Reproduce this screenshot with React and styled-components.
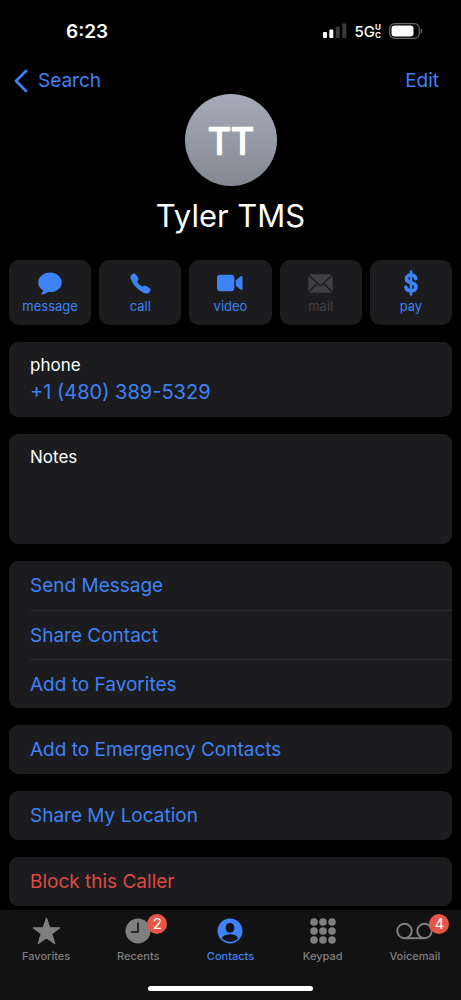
import styled, { createGlobalStyle } from 'styled-components';
import { IoCall } from 'react-icons/io5';

const GlobalStyle = createGlobalStyle`
  * {
    box-sizing: border-box;
  }

  body {
    margin: 0;
    background: #000;
    color: #fff;
    font-family: Inter, 'Liberation Sans', sans-serif;
  }

  button {
    font-family: inherit;
    border: 0;
    padding: 0;
    background: none;
    cursor: pointer;
  }

  a {
    color: inherit;
    text-decoration: none;
  }

  svg {
    display: block;
  }
`;

const Screen = styled.div`
  min-height: 100vh;
  display: flex;
  flex-direction: column;
`;

const StatusBar = styled.div`
  height: 62px;
  padding: 0 38px 0 66px;
  display: flex;
  align-items: center;
  justify-content: space-between;

  .time {
    font-size: 19px;
    font-weight: 600;
  }

  .indicators {
    display: flex;
    align-items: center;
    gap: 8px;
  }

  .network {
    display: flex;
    align-items: center;
    font-size: 15px;
    font-weight: 500;
  }

  .network small {
    display: grid;
    font-size: 8px;
    font-weight: 700;
    line-height: 8px;
  }
`;

const NavBar = styled.nav`
  height: 32px;
  padding: 6px 22px 0 14px;
  display: flex;
  align-items: center;
  justify-content: space-between;
  color: #3d82f7;
  font-size: 19px;
  line-height: 26px;

  a {
    display: flex;
    align-items: center;
    gap: 10px;
  }

  button {
    color: inherit;
    font-size: inherit;
    line-height: inherit;
  }
`;

const Header = styled.header`
  display: flex;
  flex-direction: column;
  align-items: center;

  h1 {
    margin: 10px 0 24px;
    font-size: 31px;
    font-weight: 400;
    line-height: 40px;
  }
`;

const Content = styled.main`
  display: flex;
  flex-direction: column;
  gap: 17px;
  padding: 0 9px 4px;
`;

const Actions = styled.div`
  display: grid;
  grid-template-columns: repeat(5, 1fr);
  gap: 8px;
`;

const ActionButton = styled.button`
  height: 65px;
  padding-top: 9px;
  display: flex;
  flex-direction: column;
  align-items: center;
  border-radius: 10px;
  background: #1c1c1e;
  color: #3d82f7;
  font-size: 13px;
  line-height: 18px;

  &:disabled {
    color: #3f3f42;
    cursor: default;
  }

  .icon {
    height: 28px;
    display: flex;
    align-items: center;
  }
`;

const Card = styled.section`
  border-radius: 9px;
  background: #1c1c1e;
  overflow: hidden;
`;

const Field = styled.div`
  min-height: ${({ $tall }) => ($tall ? 110 : 75)}px;
  padding: 11px 21px;
  display: flex;
  flex-direction: column;
  gap: 2px;
  font-size: 17px;
  line-height: 24px;

  a {
    color: #3d82f7;
    font-size: 20px;
    line-height: 26px;
  }

  textarea {
    flex: 1;
    width: 100%;
    padding: 0;
    border: 0;
    outline: 0;
    resize: none;
    background: transparent;
    color: inherit;
    font: inherit;
  }
`;

const List = styled.ul`
  list-style: none;
  margin: 0;
  padding: 0 0 0 21px;

  li + li {
    border-top: 1px solid #2b2b2d;
  }

  li {
    height: 49px;
    display: flex;
  }
`;

const RowButton = styled.button`
  flex: 1;
  text-align: left;
  color: ${({ $danger }) => ($danger ? '#dc4a3e' : '#3d82f7')};
  font-size: 19px;
`;

const TabBar = styled.footer`
  position: sticky;
  bottom: 0;
  height: 90px;
  margin-top: auto;
  padding-bottom: 9px;
  display: flex;
  flex-direction: column;
  justify-content: space-between;
  align-items: center;
  background: #121212;

  nav {
    width: 100%;
    display: grid;
    grid-template-columns: repeat(5, 1fr);
  }
`;

const Tab = styled.a`
  padding-top: 7px;
  display: flex;
  flex-direction: column;
  align-items: center;
  gap: 3px;
  color: ${({ $active }) => ($active ? '#3d82f7' : '#7f7f7f')};
  font-size: 11px;
  font-weight: 500;
  line-height: 16px;

  .icon {
    position: relative;
    height: 28px;
    display: flex;
    align-items: center;
  }
`;

const Badge = styled.span`
  position: absolute;
  top: -3px;
  left: calc(100% - 4px);
  min-width: 20px;
  height: 20px;
  border-radius: 10px;
  background: #eb5545;
  color: #fff;
  font-size: 15px;
  font-weight: 400;
  line-height: 20px;
  text-align: center;
`;

const HomeIndicator = styled.div`
  width: 36%;
  height: 5px;
  border-radius: 3px;
  background: #fff;
`;

const SignalIcon = () => (
  <svg width="24" height="16" viewBox="0 0 24 16" fill="#fff">
    <rect x="0" y="9" width="4" height="6" rx="1" />
    <rect x="6.3" y="6.5" width="4" height="8.5" rx="1" />
    <rect x="12.8" y="3.5" width="4" height="11.5" rx="1" fill="#3a3a3a" />
    <rect x="19.3" y="0.5" width="4" height="14.5" rx="1" fill="#3a3a3a" />
  </svg>
);

const BatteryIcon = () => (
  <svg width="34" height="16" viewBox="0 0 34 16">
    <rect
      x="0.7"
      y="0.7"
      width="29.6"
      height="14.6"
      rx="4.8"
      fill="none"
      stroke="#6a6a6a"
      strokeWidth="1.2"
    />
    <rect x="2.5" y="2.5" width="22" height="11" rx="3.2" fill="#fff" />
    <path d="M31.6 5.5c1.1.4 1.7 1.4 1.7 2.5s-.6 2.1-1.7 2.5z" fill="#6a6a6a" />
  </svg>
);

const BackIcon = () => (
  <svg width="14" height="24" viewBox="0 0 14 24">
    <path
      d="M12 2 2 12l10 10"
      fill="none"
      stroke="currentColor"
      strokeWidth="2.8"
      strokeLinecap="round"
      strokeLinejoin="round"
    />
  </svg>
);

const Avatar = () => (
  <svg width="92" height="92" viewBox="0 0 92 92">
    <defs>
      <linearGradient id="avatar" x1="0" y1="0" x2="0" y2="1">
        <stop offset="0" stopColor="#a6abb9" />
        <stop offset="1" stopColor="#858892" />
      </linearGradient>
    </defs>
    <circle cx="46" cy="46" r="46" fill="url(#avatar)" />
    <text
      x="46"
      y="60"
      textAnchor="middle"
      fill="#fff"
      stroke="#fff"
      strokeWidth="2.4"
      strokeLinejoin="round"
      fontSize="36"
      fontWeight="300"
    >
      TT
    </text>
  </svg>
);

const MessageIcon = () => (
  <svg width="24" height="23" viewBox="0 0 24 23" fill="currentColor">
    <path d="M12 .5C5.4.5.2 4.9.2 10.4c0 3.3 1.8 6.1 4.7 7.9.3.2.3.5.1.9-.4.9-1 1.7-1.6 2.4-.4.5-.1 1 .5.9 2.3-.2 4.3-1.2 5.8-2.3.3-.2.6-.2.9-.2.5 0 .9.1 1.4.1 6.6 0 11.800-4.300 11.800-9.700S18.600.5 12 .5z" />
  </svg>
);

const VideoIcon = () => (
  <svg width="26" height="18" viewBox="0 0 27 18" fill="currentColor">
    <rect x="0" y="0.5" width="18" height="17" rx="3.2" />
    <path d="M19.5 6.2 24.7 2c.8-.6 1.8-.3 1.8.8v12.4c0 1.1-1 1.4-1.8.8l-5.2-4.2z" />
  </svg>
);

const MailIcon = () => (
  <svg width="25" height="19" viewBox="0 0 25 19">
    <rect x="0.3" y="0.3" width="24.4" height="18.4" rx="2.8" fill="currentColor" />
    <path
      d="m1 1.2 9.600 9.300c1.200 1.100 2.600 1.100 3.800 0L24 1.200M1 17.800l8.300-8.300M24 17.800l-8.300-8.300"
      fill="none"
      stroke="#1c1c1e"
      strokeWidth="1.3"
    />
  </svg>
);

const PayIcon = () => (
  <svg width="14" height="26" viewBox="0 0 14 26">
    <path
      d="M7 1.500v23"
      stroke="currentColor"
      strokeWidth="2.600"
      strokeLinecap="round"
    />
    <path
      d="M11.800 8.600C11.300 6.300 9.600 5 7.100 5c-2.800 0-4.700 1.500-4.700 3.800 0 2 1.300 3 4.100 3.700l1.500.4c2.900.7 4 1.800 4 3.800 0 2.500-1.900 4.100-5 4.100-2.900 0-4.700-1.400-5.100-3.700"
      fill="none"
      stroke="currentColor"
      strokeWidth="3.600"
      strokeLinecap="round"
    />
  </svg>
);

const StarIcon = () => (
  <svg width="29" height="28" viewBox="0 0 28 27" fill="currentColor">
    <path
      d="m14 1.2 3.1 9.2h9.7l-7.8 5.8 2.9 9.4L14 20l-7.9 5.600L9 16.200 1.200 10.400h9.700z"
      stroke="currentColor"
      strokeWidth="1.2"
      strokeLinejoin="round"
    />
  </svg>
);

const ClockIcon = () => (
  <svg width="26" height="26" viewBox="0 0 26 26">
    <circle cx="13" cy="13" r="12.5" fill="currentColor" />
    <path
      d="M13 5v9H6.5"
      fill="none"
      stroke="#121212"
      strokeWidth="1.6"
      strokeLinecap="round"
      strokeLinejoin="round"
    />
  </svg>
);

const PersonIcon = () => (
  <svg width="26" height="26" viewBox="0 0 26 26">
    <circle cx="13" cy="13" r="12.5" fill="currentColor" />
    <ellipse cx="13" cy="9.8" rx="4.3" ry="4.9" fill="#121212" />
    <path
      d="M4.800 20.300c1.300-2.500 4.300-4 8.200-4s6.900 1.500 8.200 4c-2 2.200-5 3.500-8.200 3.500s-6.200-1.300-8.200-3.500z"
      fill="#121212"
    />
  </svg>
);

const dots = [4, 13, 22];

const KeypadIcon = () => (
  <svg width="26" height="26" viewBox="0 0 26 26" fill="currentColor">
    {dots.map((cy) =>
      dots.map((cx) => <circle key={`${cx}-${cy}`} cx={cx} cy={cy} r="3.8" />)
    )}
  </svg>
);

const VoicemailIcon = () => (
  <svg width="37" height="18" viewBox="0 0 37 18">
    <g fill="none" stroke="currentColor" strokeWidth="2">
      <circle cx="8.5" cy="9" r="7.2" />
      <circle cx="28.5" cy="9" r="7.2" />
      <path d="M8.5 16.2h20" />
    </g>
  </svg>
);

const actions = [
  { label: 'message', icon: <MessageIcon /> },
  { label: 'call', icon: <IoCall size={23} /> },
  { label: 'video', icon: <VideoIcon /> },
  { label: 'mail', icon: <MailIcon />, disabled: true },
  { label: 'pay', icon: <PayIcon /> },
];

const groups = [
  ['Send Message', 'Share Contact', 'Add to Favorites'],
  ['Add to Emergency Contacts'],
  ['Share My Location'],
  ['Block this Caller'],
];

const tabs = [
  { label: 'Favorites', icon: <StarIcon /> },
  { label: 'Recents', icon: <ClockIcon />, badge: 2 },
  { label: 'Contacts', icon: <PersonIcon />, active: true },
  { label: 'Keypad', icon: <KeypadIcon /> },
  { label: 'Voicemail', icon: <VoicemailIcon />, badge: 4 },
];

export default function App() {
  return (
    <Screen>
      <GlobalStyle />
      <StatusBar>
        <span className="time">6:23</span>
        <div className="indicators">
          <SignalIcon />
          <span className="network">
            5G
            <small>
              <span>U</span>
              <span>C</span>
            </small>
          </span>
          <BatteryIcon />
        </div>
      </StatusBar>
      <NavBar>
        <a href="#search">
          <BackIcon />
          Search
        </a>
        <button type="button">Edit</button>
      </NavBar>
      <Header>
        <Avatar />
        <h1>Tyler TMS</h1>
      </Header>
      <Content>
        <Actions>
          {actions.map(({ label, icon, disabled }) => (
            <ActionButton key={label} type="button" disabled={disabled}>
              <span className="icon">{icon}</span>
              {label}
            </ActionButton>
          ))}
        </Actions>
        <Card>
          <Field>
            <span>phone</span>
            <a href="tel:+14803895329">+1 (480) 389-5329</a>
          </Field>
        </Card>
        <Card>
          <Field $tall>
            <label htmlFor="notes">Notes</label>
            <textarea id="notes" rows={2} />
          </Field>
        </Card>
        {groups.map((rows) => (
          <Card key={rows[0]}>
            <List>
              {rows.map((row) => (
                <li key={row}>
                  <RowButton type="button" $danger={row.startsWith('Block')}>
                    {row}
                  </RowButton>
                </li>
              ))}
            </List>
          </Card>
        ))}
      </Content>
      <TabBar>
        <nav>
          {tabs.map(({ label, icon, badge, active }) => (
            <Tab key={label} href={`#${label.toLowerCase()}`} $active={active}>
              <span className="icon">
                {icon}
                {badge && <Badge>{badge}</Badge>}
              </span>
              {label}
            </Tab>
          ))}
        </nav>
        <HomeIndicator />
      </TabBar>
    </Screen>
  );
}
